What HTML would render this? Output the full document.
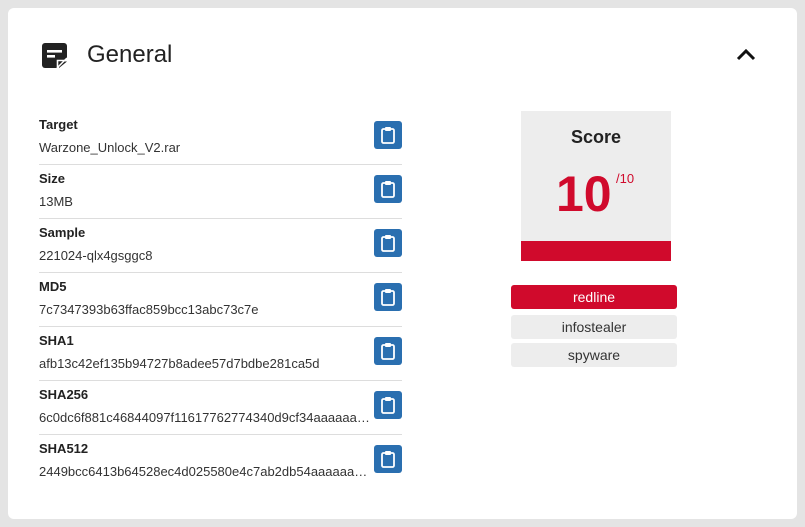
<!DOCTYPE html><html><head><style>
body{margin:0;width:805px;height:527px;background:#e4e4e4;font-family:"Liberation Sans",sans-serif;color:#222;overflow:hidden}
.card{position:absolute;left:8px;top:8px;width:789px;height:511px;background:#fff;border-radius:6px}
.row{position:absolute;left:39px;width:363px;height:54px;border-bottom:1px solid #ddd;box-sizing:border-box}
.lab{position:absolute;left:0;top:6px;font-size:13px;font-weight:bold}
.val{position:absolute;left:0;top:29px;font-size:13px;color:#333;width:334px;white-space:nowrap;overflow:hidden;text-overflow:ellipsis}
.btn{position:absolute;right:0;top:10px;width:28px;height:28px;background:#2a6fb0;border-radius:3px}
.btn svg{position:absolute;left:7px;top:5px}
.tag{position:absolute;left:511px;width:166px;height:24px;border-radius:3px;background:#ededed;font-size:14px;text-align:center;line-height:24px;color:#333}
</style></head><body>
<div class="card"></div>
<svg style="position:absolute;left:42px;top:43px" width="26" height="25" viewBox="0 0 26 25"><path d="M3 0h19a3 3 0 0 1 3 3v12l-10 10H3a3 3 0 0 1-3-3V3a3 3 0 0 1 3-3z" fill="#222"/><rect x="5" y="7" width="15" height="2.6" fill="#fff"/><rect x="5" y="12" width="8" height="2.6" fill="#fff"/><path d="M15.5 25V17.5H25" fill="none" stroke="#fff" stroke-width="1.6"/><path d="M17 25v-5.5a1 1 0 0 1 1-1h7z" fill="#222"/><path d="M25 15l-10 10" stroke="#fff" stroke-width="1.5"/></svg>
<div style="position:absolute;left:87px;top:41px;font-size:24px;color:#222">General</div>
<svg style="position:absolute;left:736px;top:48px" width="20" height="14" viewBox="0 0 20 14"><path d="M2 11l8-8 8 8" stroke="#111" stroke-width="3" fill="none"/></svg>
<div class="row" style="top:111px"><div class="lab">Target</div><div class="val">Warzone_Unlock_V2.rar</div><div class="btn"><svg width="14" height="18" viewBox="0 0 14 18"><rect x="1" y="3" width="12" height="14" rx="1.5" fill="none" stroke="#fff" stroke-width="1.8"/><rect x="4" y="1" width="6" height="4" rx="1" fill="#fff"/></svg></div></div>
<div class="row" style="top:165px"><div class="lab">Size</div><div class="val">13MB</div><div class="btn"><svg width="14" height="18" viewBox="0 0 14 18"><rect x="1" y="3" width="12" height="14" rx="1.5" fill="none" stroke="#fff" stroke-width="1.8"/><rect x="4" y="1" width="6" height="4" rx="1" fill="#fff"/></svg></div></div>
<div class="row" style="top:219px"><div class="lab">Sample</div><div class="val">221024-qlx4gsggc8</div><div class="btn"><svg width="14" height="18" viewBox="0 0 14 18"><rect x="1" y="3" width="12" height="14" rx="1.5" fill="none" stroke="#fff" stroke-width="1.8"/><rect x="4" y="1" width="6" height="4" rx="1" fill="#fff"/></svg></div></div>
<div class="row" style="top:273px"><div class="lab">MD5</div><div class="val">7c7347393b63ffac859bcc13abc73c7e</div><div class="btn"><svg width="14" height="18" viewBox="0 0 14 18"><rect x="1" y="3" width="12" height="14" rx="1.5" fill="none" stroke="#fff" stroke-width="1.8"/><rect x="4" y="1" width="6" height="4" rx="1" fill="#fff"/></svg></div></div>
<div class="row" style="top:327px"><div class="lab">SHA1</div><div class="val">afb13c42ef135b94727b8adee57d7bdbe281ca5d</div><div class="btn"><svg width="14" height="18" viewBox="0 0 14 18"><rect x="1" y="3" width="12" height="14" rx="1.5" fill="none" stroke="#fff" stroke-width="1.8"/><rect x="4" y="1" width="6" height="4" rx="1" fill="#fff"/></svg></div></div>
<div class="row" style="top:381px"><div class="lab">SHA256</div><div class="val">6c0dc6f881c46844097f11617762774340d9cf34aaaaaaaaaaaaaaaaaaaaa</div><div class="btn"><svg width="14" height="18" viewBox="0 0 14 18"><rect x="1" y="3" width="12" height="14" rx="1.5" fill="none" stroke="#fff" stroke-width="1.8"/><rect x="4" y="1" width="6" height="4" rx="1" fill="#fff"/></svg></div></div>
<div class="row" style="top:435px;border:none"><div class="lab">SHA512</div><div class="val">2449bcc6413b64528ec4d025580e4c7ab2db54aaaaaaaaaaaaaaaaaaaa</div><div class="btn"><svg width="14" height="18" viewBox="0 0 14 18"><rect x="1" y="3" width="12" height="14" rx="1.5" fill="none" stroke="#fff" stroke-width="1.8"/><rect x="4" y="1" width="6" height="4" rx="1" fill="#fff"/></svg></div></div>
<div style="position:absolute;left:521px;top:111px;width:150px;height:150px;background:#ededed">
<div style="position:absolute;top:16px;width:150px;text-align:center;font-size:18px;font-weight:bold;color:#222">Score</div>
<div style="position:absolute;left:35px;top:53px;font-size:50px;font-weight:bold;color:#d00a2c;line-height:60px">10</div>
<div style="position:absolute;left:95px;top:60px;font-size:13px;color:#d00a2c">/10</div>
<div style="position:absolute;left:0;bottom:0;width:150px;height:20px;background:#d00a2c"></div></div>
<div class="tag" style="top:285px;background:#d00a2c;color:#fff">redline</div>
<div class="tag" style="top:315px">infostealer</div>
<div class="tag" style="top:343px">spyware</div>
</body></html>
